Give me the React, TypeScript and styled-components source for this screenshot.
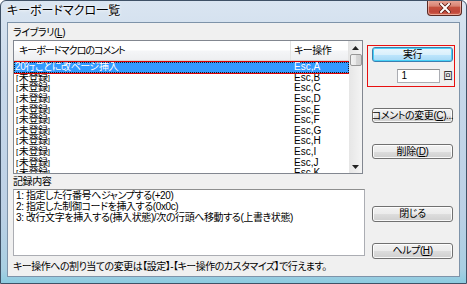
import React from "react";
import styled, { createGlobalStyle } from "styled-components";

const Global = createGlobalStyle`
  html, body { margin: 0; padding: 0; background: #ffffff; }
  body { font-family: "Liberation Sans", "Noto Sans CJK JP", sans-serif; }
`;

const FONT = `"Liberation Sans", "Noto Sans CJK JP", sans-serif`;

const Window = styled.div`
  width: 467px;
  height: 284px;
  box-sizing: border-box;
  display: flex;
  flex-direction: column;
  padding: 0 6px 6px 6px;
  border: 1px solid #3f5166;
  border-radius: 6px 6px 0 0;
  background: linear-gradient(180deg, #dae5f1 0%, #c7d8ea 30%, #bcd0e5 75%, #a9cfe2 95%, #8ccbe0 100%);
  font-family: ${FONT};
  font-feature-settings: "palt";
  letter-spacing: -0.4px;
  overflow: hidden;
`;

const TitleBar = styled.div`
  height: 21px;
  flex-shrink: 0;
  display: flex;
  align-items: flex-start;
  justify-content: space-between;
`;

const Title = styled.div`
  font-size: 12px;
  line-height: 21px;
  color: #000;
  text-shadow: 0 0 4px #fff, 0 0 2px #fff;
  letter-spacing: 0;
`;

const CloseBtn = styled.div`
  width: 35px;
  height: 16px;
  margin-top: -1px;
  margin-right: -2px;
  box-sizing: border-box;
  border: 1px solid #5a2a24;
  border-top: none;
  border-radius: 0 0 4px 4px;
  background: linear-gradient(180deg, #e9a99b 0%, #d98474 40%, #c4503d 50%, #c0463a 80%, #d46a52 100%);
  box-shadow: inset 0 0 0 1px rgba(255, 220, 210, 0.55);
  display: flex;
  align-items: center;
  justify-content: center;
`;

const Client = styled.div`
  flex: 1 0 auto;
  box-sizing: border-box;
  border: 1px solid #7e93a9;
  background: #f0f0f0;
  padding: 4px 4px 0 5px;
  display: flex;
  flex-direction: column;
`;

const Main = styled.div`
  display: grid;
  grid-template-columns: 352px 88px;
  column-gap: 2px;
  height: 231px;
  flex-shrink: 0;
`;

const LeftCol = styled.div`
  display: flex;
  flex-direction: column;
  & > * { flex-shrink: 0; }
`;

const Label = styled.div<{ $mt?: number }>`
  height: 12px;
  line-height: 12px;
  font-size: 10px;
  color: #000;
  margin-top: ${(p) => p.$mt ?? 0}px;
  margin-bottom: 1px;
  white-space: nowrap;
`;

const ListView = styled.div`
  width: 350px;
  height: 134px;
  box-sizing: border-box;
  border: 1px solid #828790;
  background: #fff;
  display: flex;
  overflow: hidden;
`;

const ListMain = styled.div`
  flex: 1;
  display: flex;
  flex-direction: column;
  overflow: hidden;
  & > * { flex-shrink: 0; }
`;

const Header = styled.div`
  height: 20px;
  box-sizing: border-box;
  display: flex;
  background: linear-gradient(180deg, #ffffff 0%, #ffffff 45%, #f4f5f7 55%, #eeeff1 100%);
  border-bottom: 1px solid #d5d5d5;
`;

const HeadCell = styled.div<{ $w?: number }>`
  ${(p) => (p.$w ? `width: ${p.$w}px;` : "flex: 1;")}
  box-sizing: border-box;
  font-size: 10px;
  line-height: 19px;
  padding-left: ${(p) => (p.$w ? 5 : 3)}px;
  letter-spacing: ${(p) => (p.$w ? -1 : -0.5)}px;
  color: #000;
  border-right: 1px solid #e3e3e3;
  white-space: nowrap;
`;

const Row = styled.div<{ $sel?: boolean }>`
  height: 10.6px;
  box-sizing: border-box;
  display: flex;
  align-items: center;
  font-size: 10px;
  line-height: 10px;
  white-space: nowrap;
  color: ${(p) => (p.$sel ? "#fff" : "#000")};
  background: ${(p) => (p.$sel ? "#3399ff" : "transparent")};
  ${(p) => (p.$sel ? "outline: 1px solid #e00000; border: 1px dotted #1a1a1a;" : "")}
`;

const Cell = styled.div<{ $w?: number; $sel?: boolean }>`
  ${(p) => (p.$w ? `width: ${p.$w}px;` : "flex: 1;")}
  box-sizing: border-box;
  padding-left: ${(p) => (p.$w ? (p.$sel ? 0 : 2) : 3)}px;
  letter-spacing: ${(p) => (p.$w ? -0.4 : 0)}px;
`;

const Bracket = styled.span`
  font-size: 8px;
  vertical-align: 1px;
  letter-spacing: 0.6px;
`;

const RowsArea = styled.div`
  padding-top: 1px;
`;

const ScrollBar = styled.div`
  width: 13px;
  flex-shrink: 0;
  display: flex;
  flex-direction: column;
  background: linear-gradient(90deg, #e6e6e6 0%, #f4f4f4 100%);
`;

const ScrollBtn = styled.div`
  height: 13px;
  flex-shrink: 0;
  display: flex;
  align-items: center;
  justify-content: center;
`;

const Thumb = styled.div`
  height: 12px;
  flex-shrink: 0;
  margin: 0 0 0 1px;
  box-sizing: border-box;
  border: 1px solid #979797;
  border-radius: 2px;
  background: linear-gradient(90deg, #f3f3f3 0%, #e8e8e8 50%, #d6d6d6 51%, #cfcfcf 100%);
`;

const Track = styled.div`
  flex: 1;
`;

const TextBox = styled.div`
  width: 352px;
  height: 67px;
  box-sizing: border-box;
  border: 1px solid #abadb3;
  border-top-color: #8e8f8f;
  background: #fff;
  padding: 0 2px;
  font-size: 10px;
  line-height: 11px;
  color: #000;
  white-space: nowrap;
`;

const RightCol = styled.div`
  display: flex;
  flex-direction: column;
  align-items: flex-start;
  & > * { flex-shrink: 0; }
`;

const RedBox = styled.div`
  margin-top: 18px;
  width: 88px;
  height: 42px;
  box-sizing: border-box;
  border: 1px solid #e81010;
  padding: 1px 1px 0 4px;
  display: flex;
  flex-direction: column;
  gap: 7px;
`;

const Btn = styled.div<{ $primary?: boolean; $h?: number; $mt?: number }>`
  width: 81px;
  height: ${(p) => p.$h ?? 15}px;
  margin-top: ${(p) => p.$mt ?? 0}px;
  margin-left: ${(p) => (p.$primary ? 0 : 5)}px;
  box-sizing: border-box;
  border: 1px solid ${(p) => (p.$primary ? "#3c7fb1" : "#707070")};
  border-radius: 3px;
  background: ${(p) =>
    p.$primary
      ? "linear-gradient(180deg, #eaf6fd 0%, #d9f0fc 50%, #bee6fd 51%, #a7d9f5 100%)"
      : "linear-gradient(180deg, #f2f2f2 0%, #ebebeb 50%, #dddddd 51%, #cfcfcf 100%)"};
  box-shadow: inset 0 0 0 1px ${(p) => (p.$primary ? "#48d1f7" : "rgba(255,255,255,0.85)")};
  font-size: 10px;
  line-height: 1;
  color: #000;
  display: flex;
  align-items: center;
  justify-content: center;
  white-space: nowrap;
`;

const CountRow = styled.div`
  display: flex;
  align-items: center;
  justify-content: flex-end;
  gap: 3px;
  padding-right: 1px;
`;

const CountInput = styled.div`
  width: 43px;
  height: 14px;
  box-sizing: border-box;
  border: 1px solid #abadb3;
  border-top-color: #8e8f8f;
  background: #fff;
  font-size: 10px;
  line-height: 12px;
  padding-left: 3px;
  color: #000;
`;

const Unit = styled.div`
  font-size: 9px;
  line-height: 10px;
  color: #000;
`;

const Footer = styled.div`
  font-size: 10px;
  line-height: 12px;
  height: 12px;
  margin-top: 3px;
  flex-shrink: 0;
  letter-spacing: -0.5px;
  color: #000;
  white-space: nowrap;
`;

const rows: [string, string][] = [
  ["20行ごとに改ページ挿入", "Esc,A"],
  ["未登録", "Esc,B"],
  ["未登録", "Esc,C"],
  ["未登録", "Esc,D"],
  ["未登録", "Esc,E"],
  ["未登録", "Esc,F"],
  ["未登録", "Esc,G"],
  ["未登録", "Esc,H"],
  ["未登録", "Esc,I"],
  ["未登録", "Esc,J"],
  ["未登録", "Esc,K"],
];

const Arrow = ({ up }: { up?: boolean }) => (
  <svg width="7" height="4" viewBox="0 0 7 4">
    {up ? <polygon points="0,4 7,4 3.5,0" fill="#222" /> : <polygon points="0,0 7,0 3.5,4" fill="#222" />}
  </svg>
);

export default function App() {
  return (
    <>
      <Global />
      <Window>
        <TitleBar>
          <Title>キーボードマクロ一覧</Title>
          <CloseBtn>
            <svg width="12" height="10" viewBox="0 0 12 10">
              <path d="M2 1 L10 9 M10 1 L2 9" stroke="#5b1a12" strokeWidth="3.6" strokeLinecap="square" />
              <path d="M2 1 L10 9 M10 1 L2 9" stroke="#ffffff" strokeWidth="2" strokeLinecap="square" />
            </svg>
          </CloseBtn>
        </TitleBar>
        <Client>
          <Main>
            <LeftCol>
              <Label>
                ライブラリ(<u>L</u>)
              </Label>
              <ListView>
                <ListMain>
                  <Header>
                    <HeadCell $w={277}>キーボードマクロのコメント</HeadCell>
                    <HeadCell>キー操作</HeadCell>
                  </Header>
                  <RowsArea>
                    {rows.map((r, i) => (
                      <Row key={i} $sel={i === 0}>
                        <Cell $w={i === 0 ? 276 : 277} $sel={i === 0}>
                          {i === 0 ? (
                            r[0]
                          ) : (
                            <>
                              <Bracket>[</Bracket>
                              {r[0]}
                              <Bracket>]</Bracket>
                            </>
                          )}
                        </Cell>
                        <Cell>{r[1]}</Cell>
                      </Row>
                    ))}
                  </RowsArea>
                </ListMain>
                <ScrollBar>
                  <ScrollBtn>
                    <Arrow up />
                  </ScrollBtn>
                  <Thumb />
                  <Track />
                  <ScrollBtn>
                    <Arrow />
                  </ScrollBtn>
                </ScrollBar>
              </ListView>
              <Label $mt={2}>記録内容</Label>
              <TextBox>
                <div>1: 指定した行番号へジャンプする(+20)</div>
                <div>2: 指定した制御コードを挿入する(0x0c)</div>
                <div>3: 改行文字を挿入する(挿入状態)/次の行頭へ移動する(上書き状態)</div>
              </TextBox>
            </LeftCol>
            <RightCol>
              <RedBox>
                <Btn $primary>実行</Btn>
                <CountRow>
                  <CountInput>1</CountInput>
                  <Unit>回</Unit>
                </CountRow>
              </RedBox>
              <Btn $mt={21}>
                コメントの変更(<u>C</u>)...
              </Btn>
              <Btn $mt={21}>
                削除(<u>D</u>)
              </Btn>
              <Btn $mt={47} $h={16}>
                閉じる
              </Btn>
              <Btn $mt={21} $h={16}>
                ヘルプ(<u>H</u>)
              </Btn>
            </RightCol>
          </Main>
          <Footer>キー操作への割り当ての変更は【設定】-【キー操作のカスタマイズ】で行えます。</Footer>
        </Client>
      </Window>
    </>
  );
}
